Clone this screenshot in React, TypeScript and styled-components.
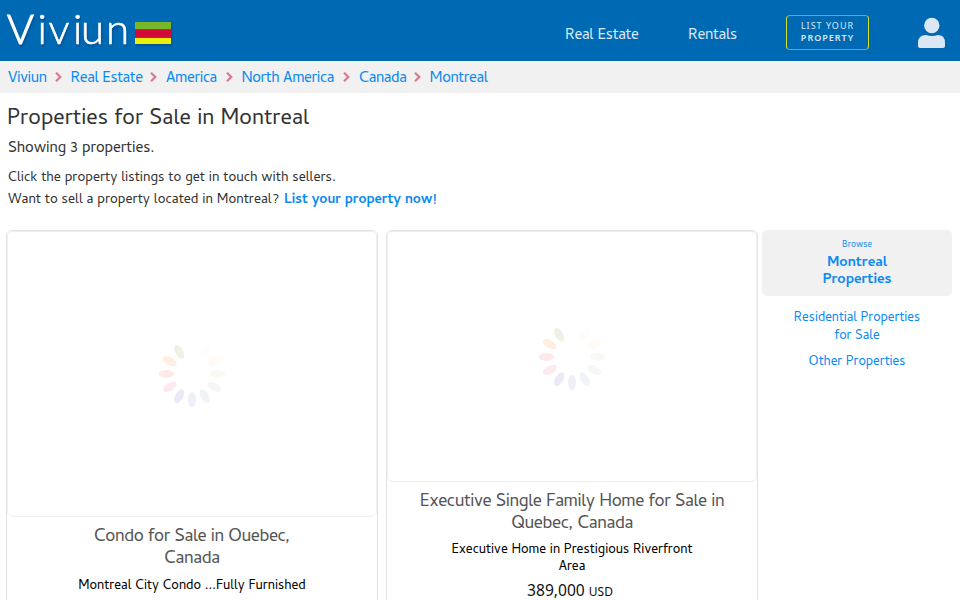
import React from "react";
import styled, { createGlobalStyle } from "styled-components";

const GlobalStyle = createGlobalStyle`
  * { box-sizing: border-box; }
  body { margin: 0; background: #fff; color: #333; overflow: hidden;
    font-family: "Cambay", "Noto Sans", sans-serif; }
  a { color: #0a8af2; text-decoration: none; }
  h1, h2, p { margin: 0; font-weight: 400; }
`;
const Page = styled.div`width: 960px; height: 600px; overflow: hidden;`;
const Header = styled.header`
  height: 61px; background: #0069b4; display: flex; align-items: flex-start;
`;
const Logo = styled.svg`width: 180px; height: 61px; margin-right: 385px; filter: drop-shadow(1px 2px 1px #00427a88);`;
const NavLink = styled.a<{ $width: number }>`
  && { color: #dbe9f5; }
  width: ${p => p.$width}px; font-size: 15.6px; letter-spacing: -0.28px; line-height: 24px; margin-top: 24px; white-space: nowrap;
`;
const ListButton = styled.a`
  && { color: #d9e8f4; }
  width: 83px; height: 35px; margin-top: 15px; padding-top: 4px;
  border: 1px solid #d3e020; border-top-color: #6fac70; border-bottom-color: #6fac70;
  border-radius: 4px; text-align: center; font-family: "Noto Sans", sans-serif; font-size: 9px;
  line-height: 12px; letter-spacing: 1px;
  b { display: block; font-weight: 600; letter-spacing: 1px; }
`;
const UserIcon = styled.svg`width: 28px; height: 32px; margin: 17px 0 0 49px;`;
const Breadcrumbs = styled.nav`
  height: 32px; background: #f1f1f1; display: flex; align-items: center; padding-left: 8px;
`;
const Crumb = styled.a<{ $width: number }>`
  width: ${p => p.$width}px; font-size: 15.5px; letter-spacing: -0.37px; line-height: 24px; padding-top: 4px; white-space: nowrap;
`;
const Chevron = styled.svg`width: 24px; height: 14px; flex: none;`;
const Intro = styled.section`padding-left: 8px; height: 137px;`;
const Title = styled.h1`font-size: 22.5px; line-height: 32px; padding-top: 11px; margin-left: -1px;`;
const Count = styled.p`font-size: 15.5px; letter-spacing: -0.08px; line-height: 24px; padding-top: 1px;`;
const Prompt = styled.p<{ $top?: number }>`
  font-size: 13.95px; line-height: 22px; margin-top: ${p => p.$top ?? 0}px;
  a { margin-left: 1px; font-weight: 700; font-size: 14.15px; }
`;
const Columns = styled.main`display: flex; align-items: flex-start; padding-left: 6px;`;
const Card = styled.article`
  width: 372px; height: 400px; margin-right: 8px; text-align: center;
  border: 1px solid #e3e3e3; border-radius: 6px 6px 0 0;
  &:nth-of-type(2) { margin-right: 4px; }
`;
const Photo = styled.div<{ $height: number }>`
  height: ${p => p.$height}px; border: 1px solid #f0f0f0; border-radius: 6px;
  display: flex; align-items: center; justify-content: center;
`;
const CardTitle = styled.h2`font-size: 18px; letter-spacing: -0.39px; line-height: 22px; color: #555; margin-top: 10px;`;
const CardText = styled.p<{ $top: number }>`
  font-size: 13.5px; line-height: 17px; color: #000; margin-top: ${p => p.$top}px;
`;
const Price = styled.p`
  font-size: 15.6px; line-height: 22px; color: #111; margin: 3px 4px 0 0;
  font-family: "Noto Sans", sans-serif;
  small { font-size: 12px; }
`;
const Sidebar = styled.aside`width: 190px; text-align: center;`;
const BrowseBox = styled.a`
  display: block; height: 66px; padding-top: 10px; background: #f1f1f1; border-radius: 5px;
  font-size: 14.6px; font-weight: 700; line-height: 17px;
  small { display: block; font: 400 9px/12px "Cambay", "Noto Sans", sans-serif; margin-bottom: 3px; }
`;
const SideLink = styled.a<{ $top: number }>`
  display: block; font-size: 13.25px; line-height: 18px; margin-top: ${p => p.$top}px;
`;

const petals = ["#fffcfa", "#fffaf5", "#fafaf5", "#f6f6f7", "#f0f4f8", "#edf0f8", "#ebe9f5", "#fdeaef", "#fde9e8", "#feefe2", "#edf1e6"];
const Spinner = () => (
  <svg width="68" height="68" viewBox="-34 -34 68 68">
    {petals.map((fill, i) => (
      <ellipse key={i} cx="25.6" rx="7.6" ry="3.9" fill={fill} transform={`rotate(${-60 + i * 30})`} />
    ))}
  </svg>
);
const crumbs: [string, number][] = [["Viviun", 38.5], ["Real Estate", 71.5], ["America", 51.5], ["North America", 93.5], ["Canada", 46.5], ["Montreal", 59]];

export default function App() {
  return (
    <Page>
      <GlobalStyle />
      <Header>
        <Logo viewBox="0 0 180 61">
          <g fill="#fff" stroke="#fff" fontFamily="Lato, sans-serif" fontWeight="300">
            <text x="7" y="43.5" fontSize="41" strokeWidth="1.2">V</text>
            <text x="37.5 48.5 73 81 106" y="44" fontSize="42" strokeWidth="0.6">iviun</text>
          </g>
          <path fill="#77b82a" d="M135 22h36v7h-36z" />
          <path fill="#d10a37" d="M135 30h36v7h-36z" />
          <path fill="#ecee0b" d="M135 38h36v6h-36z" />
          <path fill="#3d5c70" d="M135 29h36v1h-36zM135 37h36v1h-36z" />
        </Logo>
        <NavLink href="#" $width={123}>Real Estate</NavLink>
        <NavLink href="#" $width={98}>Rentals</NavLink>
        <ListButton href="#">LIST YOUR<b>PROPERTY</b></ListButton>
        <UserIcon viewBox="0 0 28 32" fill="#dbe7f3">
          <circle cx="13.8" cy="8.5" r="7.7" />
          <path d="M0 31V26Q0 18 8 18Q14 20 20 18Q27 18 27 26V29Q27 31 25 31H2Q0 31 0 29Z" />
        </UserIcon>
      </Header>
      <Breadcrumbs>
        {crumbs.map(([label, width], i) => (
          <React.Fragment key={label}>
            {i > 0 && <Chevron viewBox="0 0 24 14" fill="none" stroke="#e07890" strokeWidth="2.2"><path d="M9 2.7L13.3 7L9 11.3" /></Chevron>}
            <Crumb href="#" $width={width}>{label}</Crumb>
          </React.Fragment>
        ))}
      </Breadcrumbs>
      <Intro>
        <Title>Properties for Sale in Montreal</Title>
        <Count>Showing 3 properties.</Count>
        <Prompt $top={7}>Click the property listings to get in touch with sellers.</Prompt>
        <Prompt>Want to sell a property located in Montreal? <a href="#">List your property now!</a></Prompt>
      </Intro>
      <Columns>
        <Card>
          <Photo $height={286}><Spinner /></Photo>
          <CardTitle>Condo for Sale in Ouebec,<br />Canada</CardTitle>
          <CardText $top={7}>Montreal City Condo ...Fully Furnished</CardText>
        </Card>
        <Card>
          <Photo $height={251}><Spinner /></Photo>
          <CardTitle>Executive Single Family Home for Sale in<br />Quebec, Canada</CardTitle>
          <CardText $top={6}>Executive Home in Prestigious Riverfront<br />Area</CardText>
          <Price>389,000 <small>USD</small></Price>
        </Card>
        <Sidebar>
          <BrowseBox href="#"><small>Browse</small>Montreal<br />Properties</BrowseBox>
          <SideLink href="#" $top={14}>Residential Properties<br />for Sale</SideLink>
          <SideLink href="#" $top={8}>Other Properties</SideLink>
        </Sidebar>
      </Columns>
    </Page>
  );
}
